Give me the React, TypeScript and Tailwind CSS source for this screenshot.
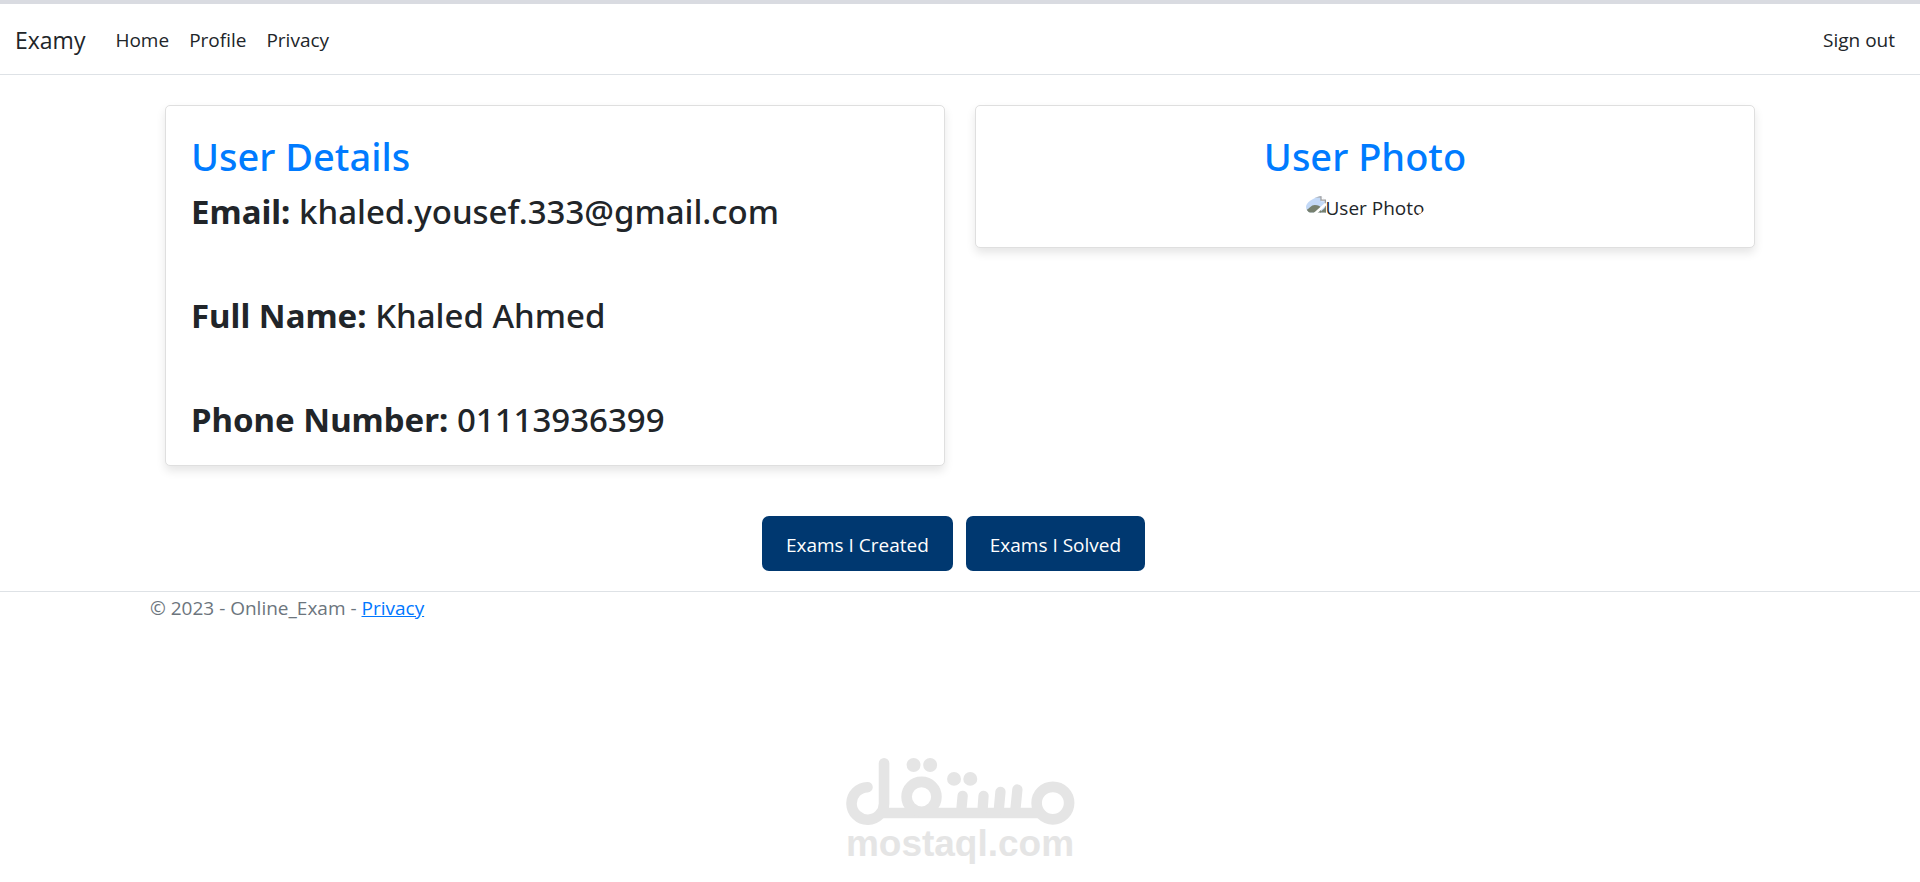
import type { ReactNode } from 'react';

const USER_DETAILS = [
  { label: 'Email:', value: 'khaled.yousef.333@gmail.com' },
  { label: 'Full Name:', value: 'Khaled Ahmed' },
  { label: 'Phone Number:', value: '01113936399' }
];

const NAV_LINKS = ['Home', 'Profile', 'Privacy'];

const EXAM_ACTIONS = ['Exams I Created', 'Exams I Solved'];

const Card = ({ children }: { children: ReactNode }) => (
  <section className="rounded-[5px] border border-[#dfdfdf] bg-white px-[25px] pt-[25px] pb-[23px] shadow-[0_5px_10px_rgba(0,0,0,0.1)]">
    {children}
  </section>
);

const MissingImageIcon = () => (
  <svg className="mt-[3px] h-5 w-5 shrink-0" viewBox="0 0 16 16" aria-hidden="true">
    <path d="M0 1h12l4 4v9H0z" fill="#c3d9f7" />
    <path d="M0 14v-2c3-1 4-4 7-4s4 1 5 2v4z" fill="#76806f" />
    <path d="M12 1l4 4h-4z" fill="#fff" />
    <path d="M0 1.500h12M15.500 4v10M12 1v3h4" fill="none" stroke="#a0a0a0" />
    <path d="M7 15l9-8" stroke="#fff" strokeWidth="2" />
    <path d="M11 14l5-4.500V14z" fill="#76806f" />
  </svg>
);

const MostaqlMark = () => (
  <svg className="h-[67px] w-[230px]" viewBox="45 54 690 202" fill="none" stroke="#e5e5e5" strokeWidth="32" strokeLinecap="round" aria-hidden="true">
    <path d="M111 142A49 49 0 1 0 161 190V70" />
    <path d="M148 220H632" strokeLinecap="butt" />
    <circle cx="274" cy="171" r="45" />
    <circle cx="670" cy="190" r="49" />
    <path d="M398 168L394 210M461 168L458 210M512 156L507 210M563 149L557 210" strokeWidth="31" />
    <g fill="#e5e5e5" stroke="none">
      <circle cx="250" cy="75" r="21" />
      <circle cx="300" cy="75" r="21" />
      <circle cx="372" cy="117" r="21" />
      <circle cx="421" cy="117" r="21" />
    </g>
  </svg>
);

const App = () => {
  return (
    <div className="flex min-h-screen flex-col bg-white font-['Open_Sans','Noto_Sans',sans-serif] text-[19px] leading-[32px] text-[#212529]">
      <header className="border-t-4 border-b border-t-[#d9dbe1] border-b-[#dee2e6]">
        <nav className="flex h-[70px] items-center px-[15px] pt-[2px]">
          <a href="#" className="mr-5 text-[23px]">Examy</a>
          <ul className="flex flex-1">
            {NAV_LINKS.map(link => (
              <li key={link}>
                <a href="#" className="px-[10px]">{link}</a>
              </li>
            ))}
          </ul>
          <a href="#" className="px-[10px]">Sign out</a>
        </nav>
      </header>

      <main className="mx-auto w-full max-w-[1650px] px-[30px] pt-[30px]">
        <div className="grid grid-cols-1 items-start gap-[30px] lg:grid-cols-2">
          <Card>
            <h2 className="mb-[9px] font-['Noto_Sans',sans-serif] text-[38px] leading-[50px] font-medium text-[#007bff]">User Details</h2>
            <div className="flex flex-col gap-[60px] font-['Noto_Sans',sans-serif]">
              {USER_DETAILS.map(({ label, value }) => (
                <h3 key={label} className="text-[33px] leading-[44px] font-medium">
                  <strong className="font-bold">{label}</strong> {value}
                </h3>
              ))}
            </div>
          </Card>

          <Card>
            <h2 className="mb-[9px] text-center font-['Noto_Sans',sans-serif] text-[38px] leading-[50px] font-medium text-[#007bff]">User Photo</h2>
            <div className="flex h-[34px] justify-center">
              <div className="flex h-[34px] overflow-hidden rounded-[50%] pt-[2px]">
                <MissingImageIcon />
                <span>User Photo</span>
              </div>
            </div>
          </Card>
        </div>

        <div className="mt-[50px] mb-5 flex justify-center">
          {EXAM_ACTIONS.map(action => (
            <button key={action} type="button" className="mr-[13px] h-[55px] rounded-[7px] bg-[#003870] px-6 pt-[2px] text-white">
              {action}
            </button>
          ))}
        </div>
      </main>

      <footer className="border-t border-[#dee2e6] text-[#6c757d]">
        <div className="mx-auto max-w-[1650px] px-[15px]">
          &copy; 2023 - Online_Exam - <a href="#" className="text-[#0077ff] underline">Privacy</a>
        </div>
      </footer>

      {/* Watermark */}
      <div className="mt-auto flex flex-col items-center pb-[19px]">
        <MostaqlMark />
        <span className="font-['Liberation_Sans',Arial,sans-serif] text-[37px] leading-[38px] font-bold text-[#e5e5e5]">mostaql.com</span>
      </div>
    </div>
  );
};

export default App;
